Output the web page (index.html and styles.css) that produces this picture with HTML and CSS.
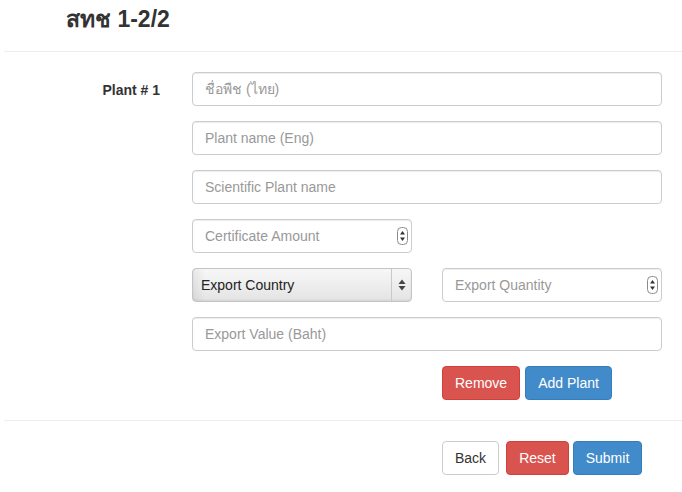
FILE: index.html
```html
<!DOCTYPE html>
<html>
<head>
<meta charset="utf-8">
<link rel="stylesheet" href="styles.css">
</head>
<body>
<div class="page">
  <h1 class="title">สทช 1-2/2</h1>
  <div class="rule"></div>
  <form class="form">
    <div class="row">
      <label class="label">Plant # 1</label>
      <div class="fields">
        <input class="input" type="text" placeholder="ชื่อพืช (ไทย)">
        <input class="input" type="text" placeholder="Plant name (Eng)">
        <input class="input" type="text" placeholder="Scientific Plant name">
        <div class="pair">
          <div class="spin-wrap">
            <input class="input" type="text" placeholder="Certificate Amount">
            <svg class="spinner" width="11" height="18" viewBox="0 0 11 18"><rect x="0.5" y="0.5" width="10" height="17" rx="4" fill="#fff" stroke="#8a8a8a"/><path d="M5.5 4 L8 7.5 L3 7.5 Z" fill="#333"/><path d="M5.5 14 L8 10.5 L3 10.5 Z" fill="#333"/></svg>
          </div>
        </div>
        <div class="pair">
          <div class="select-wrap">
            <select class="select"><option>Export Country</option></select>
            <svg class="sel-arrows" width="8" height="12" viewBox="0 0 8 12"><path d="M4 0.5 L7.5 5 L0.5 5 Z" fill="#444"/><path d="M4 11.5 L7.5 7 L0.5 7 Z" fill="#444"/></svg>
          </div>
          <div class="spin-wrap">
            <input class="input" type="text" placeholder="Export Quantity">
            <svg class="spinner" width="11" height="18" viewBox="0 0 11 18"><rect x="0.5" y="0.5" width="10" height="17" rx="4" fill="#fff" stroke="#8a8a8a"/><path d="M5.5 4 L8 7.5 L3 7.5 Z" fill="#333"/><path d="M5.5 14 L8 10.5 L3 10.5 Z" fill="#333"/></svg>
          </div>
        </div>
        <input class="input" type="text" placeholder="Export Value (Baht)">
        <div class="actions">
          <button type="button" class="btn btn-danger">Remove</button>
          <button type="button" class="btn btn-primary">Add Plant</button>
        </div>
      </div>
    </div>
    <div class="rule rule-bottom"></div>
    <div class="footer">
      <button type="button" class="btn btn-default back">Back</button>
      <button type="button" class="btn btn-danger">Reset</button>
      <button type="button" class="btn btn-primary">Submit</button>
    </div>
  </form>
</div>
</body>
</html>
```
FILE: styles.css
```css
* { box-sizing: border-box; }
body {
  margin: 0;
  background: #fff;
  font-family: "Liberation Sans", Arial, "Noto Sans", sans-serif;
  font-size: 14px;
  color: #333;
}
.page { width: 682px; }
.title {
  margin: 6px 0 0 66px;
  font-size: 23px;
  line-height: 26px;
  font-weight: bold;
  color: #333;
  height: 45px;
}
.rule {
  margin-left: 4px;
  height: 1px;
  background: #eee;
}
.form { margin: 0; }
.row {
  display: flex;
  padding-top: 20px;
}
.label {
  width: 160px;
  text-align: right;
  font-weight: bold;
  padding-top: 8px;
  line-height: 20px;
  margin-right: 32px;
}
.fields {
  width: 470px;
  display: flex;
  flex-direction: column;
  gap: 15px;
}
.input {
  display: block;
  width: 100%;
  height: 34px;
  padding: 6px 12px;
  font-family: inherit;
  font-size: 14px;
  line-height: 20px;
  color: #555;
  background: #fff;
  border: 1px solid #ccc;
  border-radius: 4px;
  box-shadow: inset 0 1px 1px rgba(0,0,0,0.075);
  outline: none;
}
.input::placeholder { color: #999; }
.pair {
  display: flex;
  gap: 30px;
}
.spin-wrap, .select-wrap {
  position: relative;
  width: 220px;
}
.spinner {
  position: absolute;
  right: 4px;
  top: 8px;
}
.select {
  display: block;
  width: 100%;
  height: 34px;
  padding: 0 8px;
  font-family: inherit;
  font-size: 14px;
  color: #222;
  -webkit-appearance: none;
  appearance: none;
  border: 1px solid #c4c4c4;
  border-radius: 4px;
  background: linear-gradient(to right, rgba(0,0,0,0.06), rgba(0,0,0,0) 12px),
              linear-gradient(#f7f7f7, #e4e4e4);
  box-shadow: inset 0 -1px 2px rgba(0,0,0,0.08);
  outline: none;
}
.select-wrap::after {
  content: "";
  position: absolute;
  top: 1px;
  bottom: 1px;
  right: 20px;
  width: 1px;
  background: #c9c9c9;
}
.sel-arrows {
  position: absolute;
  right: 6px;
  top: 11px;
}
.actions {
  display: flex;
  gap: 5px;
  padding-left: 250px;
  margin-bottom: 20px;
}
.btn {
  display: inline-block;
  height: 34px;
  padding: 6px 12px;
  font-family: inherit;
  font-size: 14px;
  line-height: 20px;
  border: 1px solid transparent;
  border-radius: 4px;
  cursor: pointer;
}
.btn-danger { background: #d9534f; border-color: #d43f3a; color: #fff; }
.btn-primary { background: #428bca; border-color: #357ebd; color: #fff; }
.btn-default { background: #fff; border-color: #ccc; color: #333; }
.footer {
  display: flex;
  gap: 4px;
  padding: 20px 0 0 442px;
}
.back { margin-right: 3px; }
```
